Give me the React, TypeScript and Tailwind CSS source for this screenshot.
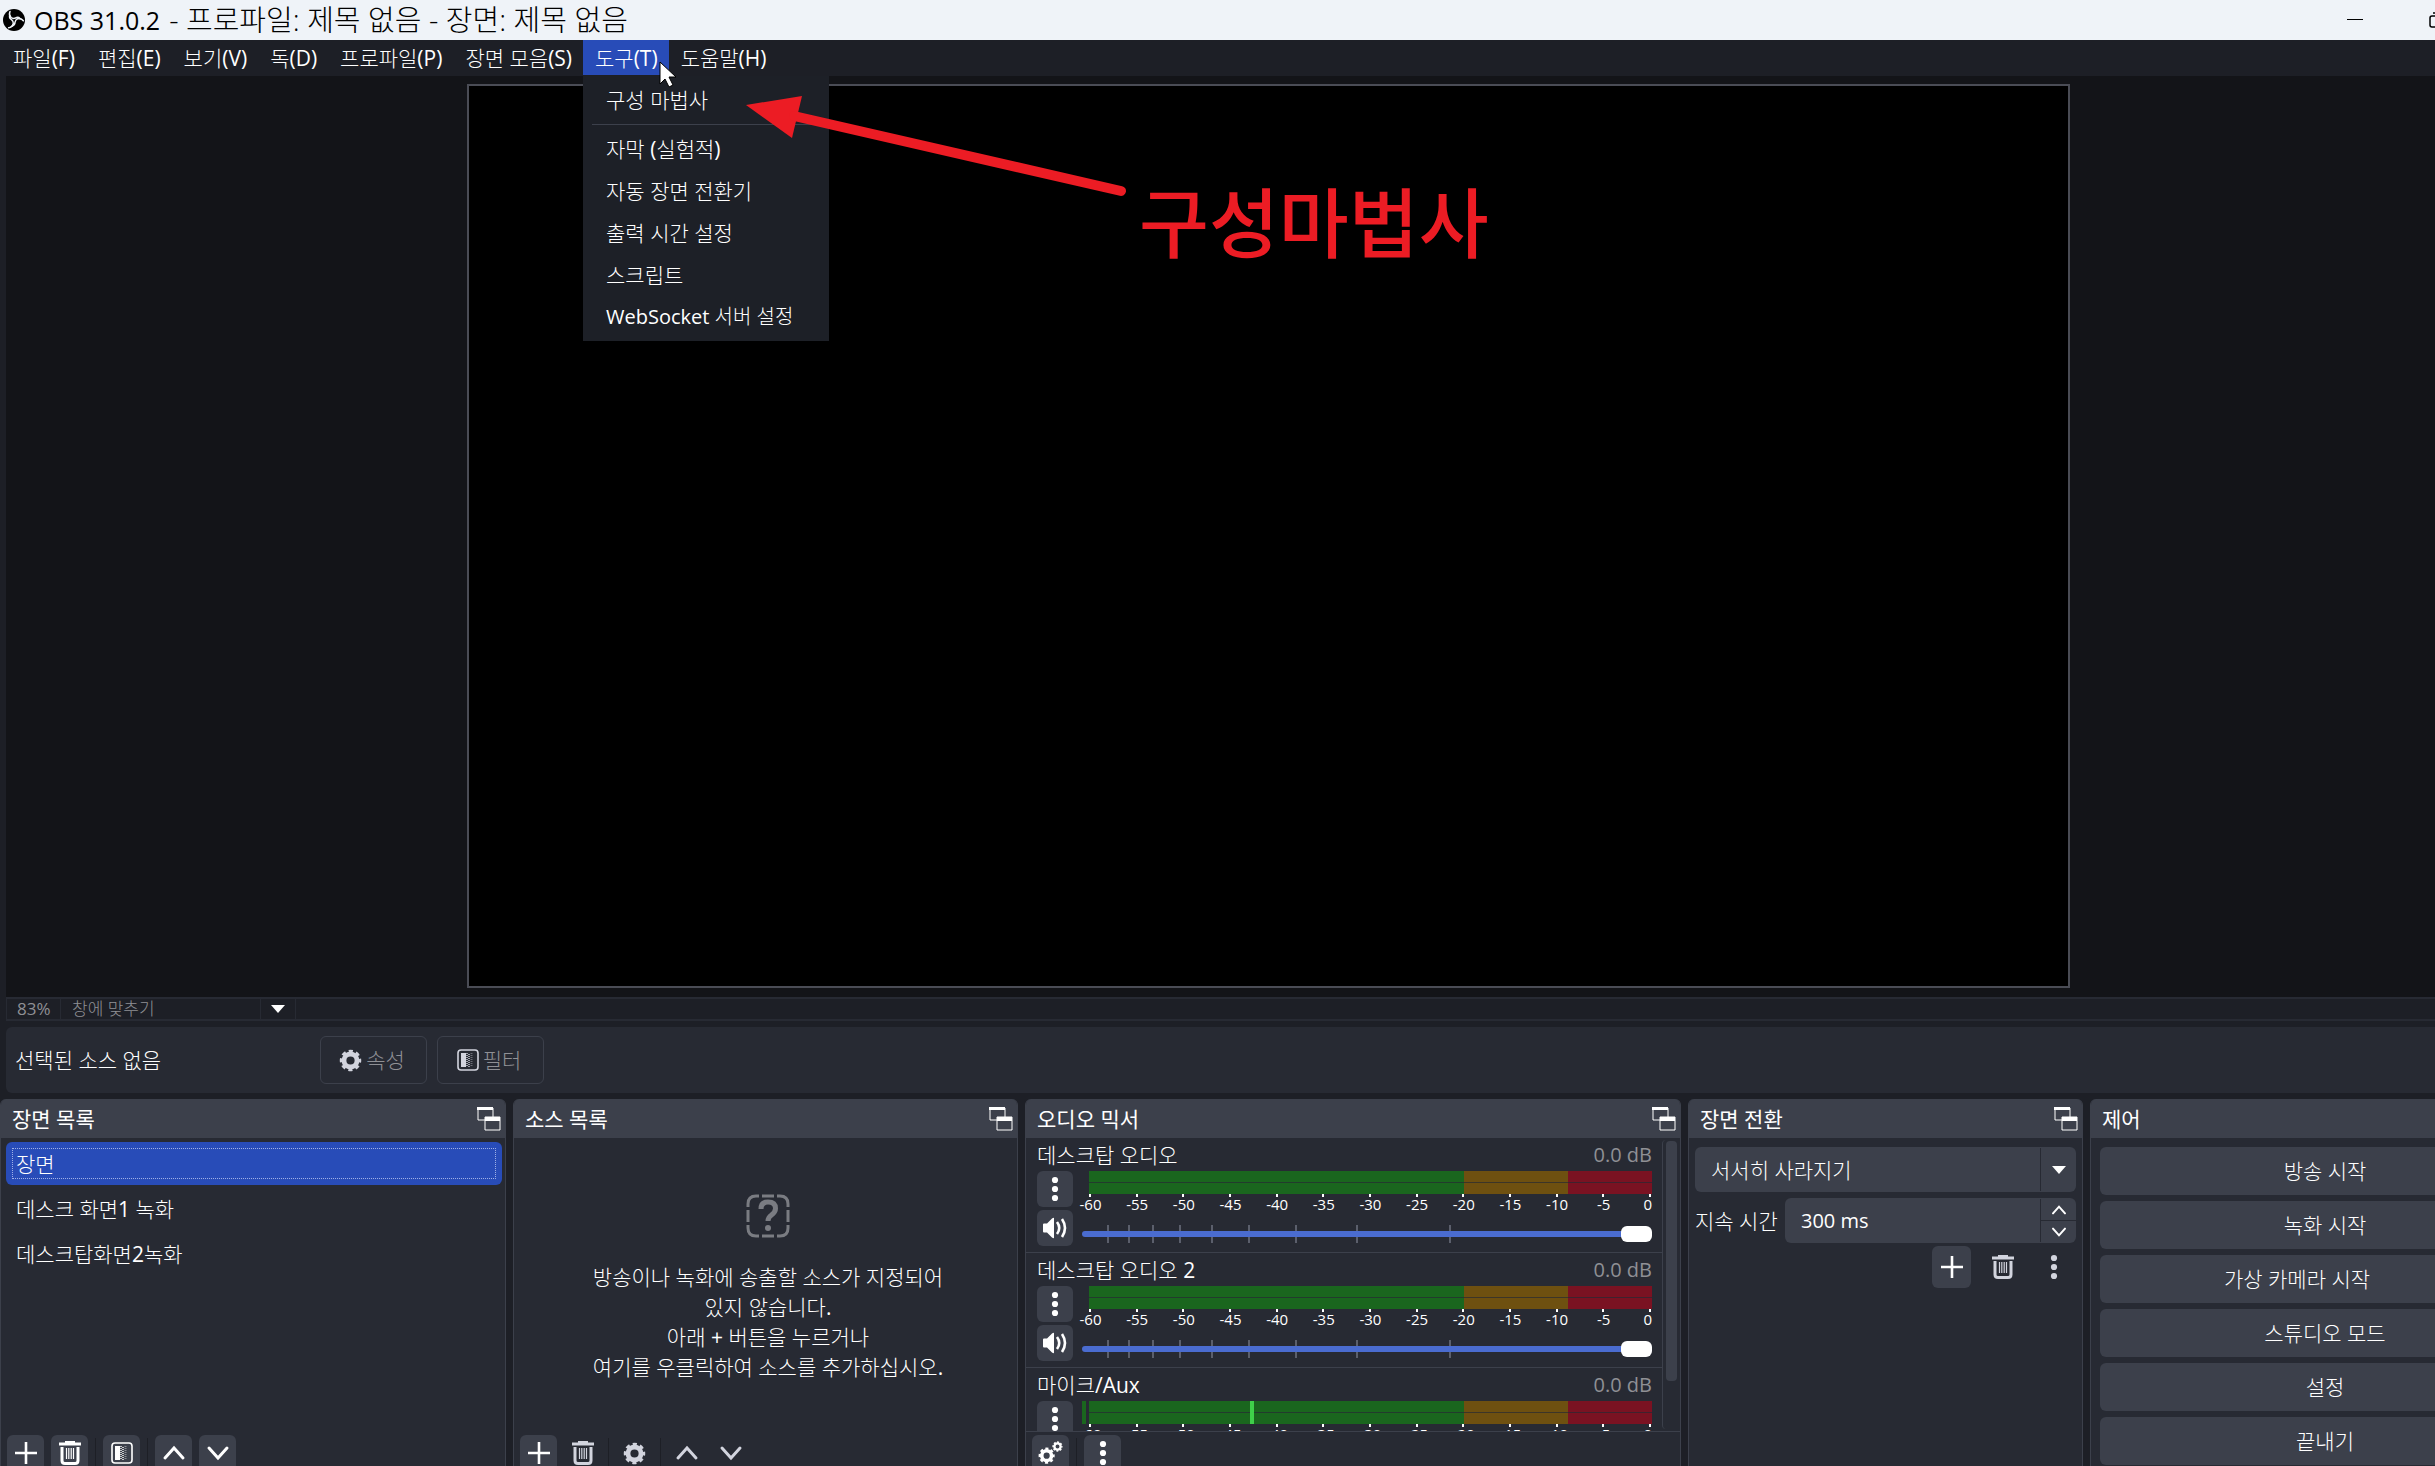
import type { ReactNode } from "react";

const menus = ["파일(F)", "편집(E)", "보기(V)", "독(D)", "프로파일(P)", "장면 모음(S)", "도구(T)", "도움말(H)"];

const toolItems = ["자막 (실험적)", "자동 장면 전환기", "출력 시간 설정", "스크립트"];

const scenes = ["장면", "데스크 화면1 녹화", "데스크탑화면2녹화"];

const channels = [
    { id: 1, name: "데스크탑 오디오", peak: false },
    { id: 2, name: "데스크탑 오디오 2", peak: false },
    { id: 3, name: "마이크/Aux", peak: true }
];

const levels = [-60, -55, -50, -45, -40, -35, -30, -25, -20, -15, -10, -5, 0];

const sliderMarks = [26, 47, 71, 98, 130, 167, 214, 275, 368];

const ObsLogo = () => (
    <svg className="ml-[3px]" width="22" height="22" viewBox="0 0 22 22">
        <circle cx="11" cy="11" r="11" fill="#000" />
        {[0, 120, 240].map((angle) => (
            <g key={angle} transform={`rotate(${angle} 11 11)`}>
                <path d="M7 2.500Q5.500 6 8 8.500Q10 10 12.500 9Q15 7.500 17 9.500" fill="none" stroke="#eff3f8" strokeWidth="1.500" strokeLinecap="round" />
                <path d="M7 2.500Q5 5.500 7 8L9 9Q6.500 6 7 2.500z" fill="#eff3f8" />
            </g>
        ))}
    </svg>
);

const PlusIcon = () => (
    <svg width="24" height="24" viewBox="0 0 24 24" fill="none" stroke="currentColor" strokeWidth="2.600">
        <path d="M12 1v22M1 12h22" />
    </svg>
);

const TrashIcon = () => (
    <svg width="24" height="26" viewBox="0 0 24 26" fill="none" stroke="currentColor">
        <path d="M7 2.500h10" strokeWidth="3" />
        <path d="M1 4h22" strokeWidth="3" />
        <path d="M4 7v13.500q0 3 3 3h10q3 0 3-3V7" strokeWidth="3" />
        <path d="M8.500 8v11M10.800 8v11M13.200 8v11M15.500 8v11" strokeWidth="1.200" />
    </svg>
);

const GearShape = () => (
    <g fill="none" stroke="currentColor">
        <circle cx="12" cy="12" r="6.800" strokeWidth="5" />
        <circle cx="12" cy="12" r="9.500" strokeWidth="3.400" strokeDasharray="4.200 3.261" strokeDashoffset="2.100" />
    </g>
);

const GearIcon = () => (
    <svg width="23" height="23" viewBox="0 0 24 24"><GearShape /></svg>
);

const GearsIcon = () => (
    <svg width="26" height="26" viewBox="0 0 26 26">
        <g transform="translate(0 7) scale(.72)"><GearShape /></g>
        <g transform="translate(14 1) scale(.46)"><GearShape /></g>
    </svg>
);

const FilterIcon = () => (
    <svg width="22" height="22" viewBox="0 0 22 22">
        <rect x="1" y="1" width="20" height="20" rx="3" fill="none" stroke="currentColor" strokeWidth="1.600" />
        <path d="M4 4h5v14H4z" fill="currentColor" />
        <path d="M10 4v14M12 5v14" stroke="currentColor" strokeWidth="2" strokeOpacity=".7" strokeDasharray="1 1" />
        <path d="M14.500 4v14" stroke="currentColor" strokeWidth="2" strokeOpacity=".4" strokeDasharray="1 1" />
    </svg>
);

const UpIcon = ({ size = 24 }: { size?: number }) => (
    <svg width={size} height={size} viewBox="0 0 24 24" fill="none" stroke="currentColor" strokeWidth="3" strokeLinecap="round">
        <path d="M3 17L12 7L21 17" />
    </svg>
);

const DownIcon = ({ size = 24 }: { size?: number }) => (
    <svg width={size} height={size} viewBox="0 0 24 24" fill="none" stroke="currentColor" strokeWidth="3" strokeLinecap="round">
        <path d="M3 7L12 17L21 7" />
    </svg>
);

const DotsIcon = () => (
    <svg width="8" height="26" viewBox="0 0 8 26" fill="currentColor">
        <circle cx="4" cy="4" r="3.100" />
        <circle cx="4" cy="13" r="3.100" />
        <circle cx="4" cy="22" r="3.100" />
    </svg>
);

const SpeakerIcon = () => (
    <svg width="26" height="24" viewBox="0 0 26 24" fill="none" stroke="currentColor" strokeWidth="2.600">
        <path d="M1 8.500q0-1 1-1h3l5-5q2-1.500 2 0v19q0 1.500-2 0l-5-5H2q-1 0-1-1z" fill="currentColor" stroke="none" />
        <path d="M15 6q4.500 6 0 12" />
        <path d="M20 3q6 9 0 18" />
    </svg>
);

const PopOutIcon = () => (
    <svg width="24" height="24" viewBox="0 0 24 24">
        <path d="M1 1h15v12H1z" fill="none" stroke="#fff" />
        <path d="M0 0h16v3H0z" fill="#fff" />
        <path d="M8 10h15v13H8z" fill="#3c404b" stroke="#fff" />
        <path d="M8 10h15v4H8z" fill="#fff" />
    </svg>
);

const ArrowDown = () => (
    <svg width="14" height="8" viewBox="0 0 14 8" fill="currentColor"><path d="M0 0h14L7 8z" /></svg>
);

const Separator = () => <span className="h-[30px] w-px bg-[#1d1f26]" />;

const ToolButton = ({ label, flat, children }: { label: string; flat?: boolean; children: ReactNode }) => (
    <button
        aria-label={label}
        className={`flex h-9 w-[37px] items-center justify-center rounded-md ${flat ? "text-[#d2d4de]" : "bg-[#3c404b]"}`}
    >
        {children}
    </button>
);

const Dock = ({ title, children }: { title: string; children: ReactNode }) => (
    <section className="flex min-w-0 flex-col overflow-hidden rounded-t-md border-x border-[#3c404b] bg-[#272a33]">
        <header className="flex h-[39px] shrink-0 items-center justify-between bg-[#3c404b] pl-[11px] pr-1">
            <h2 className="font-['Open_Sans','Noto_Sans_CJK_KR',sans-serif] text-[21px] leading-[30px]">{title}</h2>
            <button aria-label={`${title} 분리`}><PopOutIcon /></button>
        </header>
        {children}
    </section>
);

const Meter = ({ peak }: { peak: boolean }) => (
    <div className="relative ml-[7px]">
        <div className="relative flex h-[23px]">
            <div className="grow-[375] bg-[#1a661e]" />
            <div className="grow-[104] bg-[#6e5010]" />
            <div className="grow-[84] bg-[#7a1222]" />
            <div className="absolute inset-x-0 top-[11px] h-px bg-[#272a33]/70" />
            {peak && <div className="absolute -left-[7px] top-0 h-full w-1 bg-[#1a661e]" />}
            {peak && <div className="absolute left-[161px] top-0 h-full w-1 bg-[#3fcf4a]" />}
        </div>
        <div className="flex justify-between pr-px">
            {levels.map((level) => (
                <div key={level} className="flex w-[2px] flex-col items-center text-[15px] leading-[15px]">
                    <span className="h-[3px] w-[2px] bg-white" />
                    <span className={`whitespace-nowrap ${level === 0 ? "mr-1" : "ml-px"}`}>{level}</span>
                </div>
            ))}
        </div>
    </div>
);

const Channel = ({ name, peak }: { name: string; peak: boolean }) => (
    <div className="h-[115px] border-b border-[#3c404b] pl-[11px] pr-[10px]">
        <div className="flex h-[33px] items-center justify-between leading-[30px]">
            <span className="text-[21px]">{name}</span>
            <span className="text-[20px] text-[#8f9095]">0.0 dB</span>
        </div>
        <div className="flex gap-[9px]">
            <div className="flex flex-col gap-[3px]">
                <button aria-label={`${name} 메뉴`} className="flex h-9 w-9 items-center justify-center rounded-md bg-[#3c404b]"><DotsIcon /></button>
                <button aria-label={`${name} 음소거`} className="flex h-9 w-9 items-center justify-center rounded-md bg-[#3c404b]"><SpeakerIcon /></button>
            </div>
            <div className="min-w-0 flex-1">
                <Meter peak={peak} />
                <div className="relative mt-3 h-5">
                    <svg className="absolute left-0 top-0 h-5 w-full" stroke="#5b5f6c" strokeWidth="2">
                        {sliderMarks.map((x) => <path key={x} d={`M${x} 1v18`} />)}
                    </svg>
                    <input
                        type="range"
                        aria-label={`${name} 음량`}
                        defaultValue={100}
                        className="absolute left-0 top-[7px] block h-[6px] w-full appearance-none rounded-full bg-[#4a6cd0] [&::-webkit-slider-thumb]:h-4 [&::-webkit-slider-thumb]:w-[31px] [&::-webkit-slider-thumb]:appearance-none [&::-webkit-slider-thumb]:rounded-md [&::-webkit-slider-thumb]:bg-white"
                    />
                </div>
            </div>
        </div>
    </div>
);

const TitleBar = () => (
    <header className="flex h-10 shrink-0 items-center bg-[#eff3f8] text-black">
        <ObsLogo />
        <h1 className="ml-[9px] flex flex-1 items-center gap-[9px] whitespace-nowrap font-['Open_Sans','Noto_Sans_CJK_KR',sans-serif] text-[29px] font-light leading-10">
            <span className="text-[25px] font-normal">OBS 31.0.2</span>
            <span>- 프로파일: 제목 없음 - 장면: 제목 없음</span>
        </h1>
        <button aria-label="최소화" className="flex w-[82px] justify-center">
            <svg width="16" height="16" stroke="currentColor"><path d="M0 7.500h16" /></svg>
        </button>
        <button aria-label="이전 크기로" className="flex w-[82px] justify-center">
            <svg width="16" height="16" fill="none" stroke="currentColor" strokeWidth="1.500">
                <rect x="1" y="4" width="11" height="11" rx="2" />
                <path d="M4 1h8q3 0 3 3v8" />
            </svg>
        </button>
        <button aria-label="닫기" className="flex w-[82px] justify-center">
            <svg width="16" height="16" stroke="currentColor"><path d="M1 1l14 14M15 1L1 15" /></svg>
        </button>
    </header>
);

const ToolsMenu = () => (
    <div className="absolute left-0 top-9 z-10 w-[246px] bg-[#1d2027] py-[3px]">
        <button className="flex h-[42px] w-full items-center px-[23px]">구성 마법사</button>
        <hr className="mx-[9px] my-[3px] border-[#3c404b]" />
        {toolItems.map((item) => (
            <button key={item} className="flex h-[42px] w-full items-center px-[23px]">{item}</button>
        ))}
        <button className="flex h-[42px] w-full items-center whitespace-nowrap px-[23px] text-[20px]">WebSocket 서버 설정</button>
    </div>
);

const MenuBar = () => (
    <nav className="flex h-9 shrink-0 whitespace-nowrap pl-px text-[21px] leading-[30px]">
        {menus.map((menu) => (
            <div key={menu} className="relative">
                <button className={`flex h-[35px] items-center pl-3 pr-[11px] ${menu === "도구(T)" ? "bg-[#284cb8]" : ""}`}>{menu}</button>
                {menu === "도구(T)" && <ToolsMenu />}
            </div>
        ))}
    </nav>
);

// red arrow, caption and the mouse pointer drawn over the window
const Annotation = () => (
    <div className="pointer-events-none absolute inset-0 z-20">
        <svg className="absolute left-0 top-0" width="1200" height="240" viewBox="0 0 1200 240">
            <path d="M746 105L802 96L792 138z" fill="#ec1c24" />
            <path d="M794 116L1121 191" stroke="#ec1c24" strokeWidth="10" strokeLinecap="round" />
            <path d="M660 62v22l5-5l4 8l4-2l-4-8h7z" fill="#fff" stroke="#000" />
        </svg>
        <p className="absolute left-[1139px] top-[165px] font-['Noto_Sans_CJK_KR',sans-serif] text-[76px] font-medium leading-[108px] text-[#ec1c24]">구성마법사</p>
    </div>
);

const App = () => {
    return (
        <div className="relative h-screen overflow-hidden bg-[#1d1f26] font-['Open_Sans','Noto_Sans_CJK_KR_Light','Noto_Sans_CJK_KR',sans-serif] text-white">
            {/* the window runs past the right and bottom edges */}
            <div className="flex h-[calc(100%+14px)] w-[calc(100%+125px)] flex-col">
                <TitleBar />
                <MenuBar />

                <main className="ml-[6px] flex min-h-0 flex-1 justify-center bg-[#131418] pb-[9px] pr-[30px] pt-2">
                    <div className="aspect-[1603/904] h-full border-2 border-[#4a4c55] bg-black" />
                </main>

                <div className="ml-[6px] flex h-6 shrink-0 items-stretch border-y-2 border-l border-[#272a33] text-[17px] leading-5 text-[#8f9095]">
                    <span className="w-[54px] border-r border-[#272a33] pl-[10px]">83%</span>
                    <select aria-label="미리보기 배율" className="w-[200px] appearance-none border-r border-[#272a33] pl-[11px]">
                        <option>창에 맞추기</option>
                    </select>
                    <span className="flex w-[35px] items-center justify-center border-r border-[#272a33] text-white"><ArrowDown /></span>
                </div>

                <div className="ml-[6px] mt-[6px] flex h-[66px] shrink-0 items-center rounded-md bg-[#272a33] pl-[9px] text-[21px] leading-[30px]">
                    <span className="w-[305px]">선택된 소스 없음</span>
                    <button className="flex h-12 w-[107px] items-center justify-center gap-1 rounded-md border border-[#3c404b] pr-[3px] text-[#8f9095]">
                        <span className="text-[#d2d4de]"><GearIcon /></span>속성
                    </button>
                    <button className="ml-[10px] flex h-12 w-[107px] items-center justify-center gap-1 rounded-md border border-[#3c404b] pr-[3px] text-[#8f9095]">
                        <span className="text-[#d2d4de]"><FilterIcon /></span>필터
                    </button>
                </div>

                <div className="mt-[6px] grid h-[381px] shrink-0 grid-cols-[506fr_505fr_656fr_395fr_470fr] gap-[7px]">
                    <Dock title="장면 목록">
                        <ul className="flex h-[297px] shrink-0 flex-col gap-[2px] pl-[5px] pr-[3px] pt-1 text-[21px] leading-[30px]">
                            {scenes.map((scene, i) => (
                                <li key={scene} className={`h-[43px] rounded-md p-[6px] ${i === 0 ? "bg-[#284cb8]" : ""}`}>
                                    <div className={`flex h-[31px] items-center border border-dotted pl-[3px] ${i === 0 ? "border-[#9fb0e6]" : "border-transparent"}`}>{scene}</div>
                                </li>
                            ))}
                        </ul>
                        <div className="flex items-center gap-[7px] px-[6px]">
                            <ToolButton label="장면 추가"><PlusIcon /></ToolButton>
                            <ToolButton label="장면 삭제"><TrashIcon /></ToolButton>
                            <Separator />
                            <ToolButton label="장면 필터"><FilterIcon /></ToolButton>
                            <Separator />
                            <ToolButton label="위로"><UpIcon /></ToolButton>
                            <ToolButton label="아래로"><DownIcon /></ToolButton>
                        </div>
                    </Dock>

                    <Dock title="소스 목록">
                        <div className="flex h-[297px] shrink-0 flex-col items-center pl-[5px] pt-14 text-center text-[21px] leading-[30px]">
                            <svg width="44" height="44" viewBox="0 0 44 44" fill="none" stroke="#7a7c82" strokeWidth="3">
                                <path d="M2 13V10Q2 2 10 2h3M31 2h3q8 0 8 8v3M42 31v3q0 8-8 8h-3M13 42h-3q-8 0-8-8v-3M16 2h12M16 42h12M2 16v12M42 16v12" />
                                <path d="M15 15q0-7 7-7q7.500 0 7.500 6.500q0 3.500-4 6.500q-3.500 2.500-3.500 6" strokeWidth="5" />
                                <circle cx="22" cy="34" r="3" fill="#7a7c82" stroke="none" />
                            </svg>
                            <p className="mt-6">
                                방송이나 녹화에 송출할 소스가 지정되어<br />
                                있지 않습니다.<br />
                                아래 + 버튼을 누르거나<br />
                                여기를 우클릭하여 소스를 추가하십시오.
                            </p>
                        </div>
                        <div className="flex items-center gap-[7px] px-[6px]">
                            <ToolButton label="소스 추가"><PlusIcon /></ToolButton>
                            <ToolButton label="소스 삭제" flat><TrashIcon /></ToolButton>
                            <Separator />
                            <ToolButton label="소스 속성" flat><GearIcon /></ToolButton>
                            <Separator />
                            <ToolButton label="위로" flat><UpIcon /></ToolButton>
                            <ToolButton label="아래로" flat><DownIcon /></ToolButton>
                        </div>
                    </Dock>

                    <Dock title="오디오 믹서">
                        <div className="flex h-[294px] shrink-0 overflow-hidden border-b border-[#3c404b]">
                            <div className="min-w-0 flex-1">
                                {channels.map((channel) => <Channel key={channel.id} name={channel.name} peak={channel.peak} />)}
                            </div>
                            <div className="my-[2px] w-[18px] rounded-l border-l border-[#3c404b] pl-[3px] pt-px">
                                <div className="h-[240px] w-[11px] rounded bg-[#3c404b]" />
                            </div>
                        </div>
                        <div className="mt-[3px] flex items-center gap-[7px] px-[6px]">
                            <ToolButton label="고급 오디오 속성"><GearsIcon /></ToolButton>
                            <Separator />
                            <ToolButton label="오디오 믹서 메뉴"><DotsIcon /></ToolButton>
                        </div>
                    </Dock>

                    <Dock title="장면 전환">
                        <div className="flex flex-col gap-[6px] px-[6px] pt-[9px] text-[21px] leading-[30px]">
                            <div className="flex h-[45px] rounded-md bg-[#3c404b]">
                                <select aria-label="장면 전환 효과" className="min-w-0 flex-1 appearance-none pl-[16px]">
                                    <option>서서히 사라지기</option>
                                </select>
                                <span className="my-px flex w-9 items-center justify-center border-l border-[#272a33]"><ArrowDown /></span>
                            </div>
                            <div className="flex items-center">
                                <label htmlFor="duration" className="w-[90px] shrink-0">지속 시간</label>
                                <div className="flex h-[45px] min-w-0 flex-1 rounded-md bg-[#3c404b]">
                                    <input id="duration" defaultValue="300 ms" className="min-w-0 flex-1 pl-[16px] text-[20px]" />
                                    <div className="my-px flex w-9 flex-col border-l border-[#272a33]">
                                        <button aria-label="늘리기" className="flex flex-1 items-center justify-center border-b border-[#272a33]"><UpIcon size={16} /></button>
                                        <button aria-label="줄이기" className="flex flex-1 items-center justify-center"><DownIcon size={16} /></button>
                                    </div>
                                </div>
                            </div>
                        </div>
                        <div className="mt-[3px] flex justify-end gap-3 pr-[9px]">
                            <button aria-label="전환 추가" className="flex h-[42px] w-[39px] items-center justify-center rounded-md bg-[#3c404b]"><PlusIcon /></button>
                            <button aria-label="전환 삭제" className="flex h-[42px] w-[39px] items-center justify-center text-[#d2d4de]"><TrashIcon /></button>
                            <button aria-label="전환 메뉴" className="flex h-[42px] w-[39px] items-center justify-center text-[#d2d4de]"><DotsIcon /></button>
                        </div>
                    </Dock>

                    <Dock title="제어">
                        <div className="flex flex-col gap-[6px] p-[9px] text-[21px] leading-[30px]">
                            <button className="h-12 shrink-0 rounded-md bg-[#3c404b]">방송 시작</button>
                            <button className="h-12 shrink-0 rounded-md bg-[#3c404b]">녹화 시작</button>
                            <div className="flex gap-[6px]">
                                <button className="h-12 flex-1 rounded-md bg-[#3c404b]">가상 카메라 시작</button>
                                <button aria-label="가상 카메라 설정" className="flex h-12 w-[50px] items-center justify-center rounded-md bg-[#3c404b]"><GearIcon /></button>
                            </div>
                            <button className="h-12 shrink-0 rounded-md bg-[#3c404b]">스튜디오 모드</button>
                            <button className="h-12 shrink-0 rounded-md bg-[#3c404b]">설정</button>
                            <button className="h-12 shrink-0 rounded-md bg-[#3c404b]">끝내기</button>
                        </div>
                    </Dock>
                </div>
            </div>
            <Annotation />
        </div>
    );
};

export default App;
